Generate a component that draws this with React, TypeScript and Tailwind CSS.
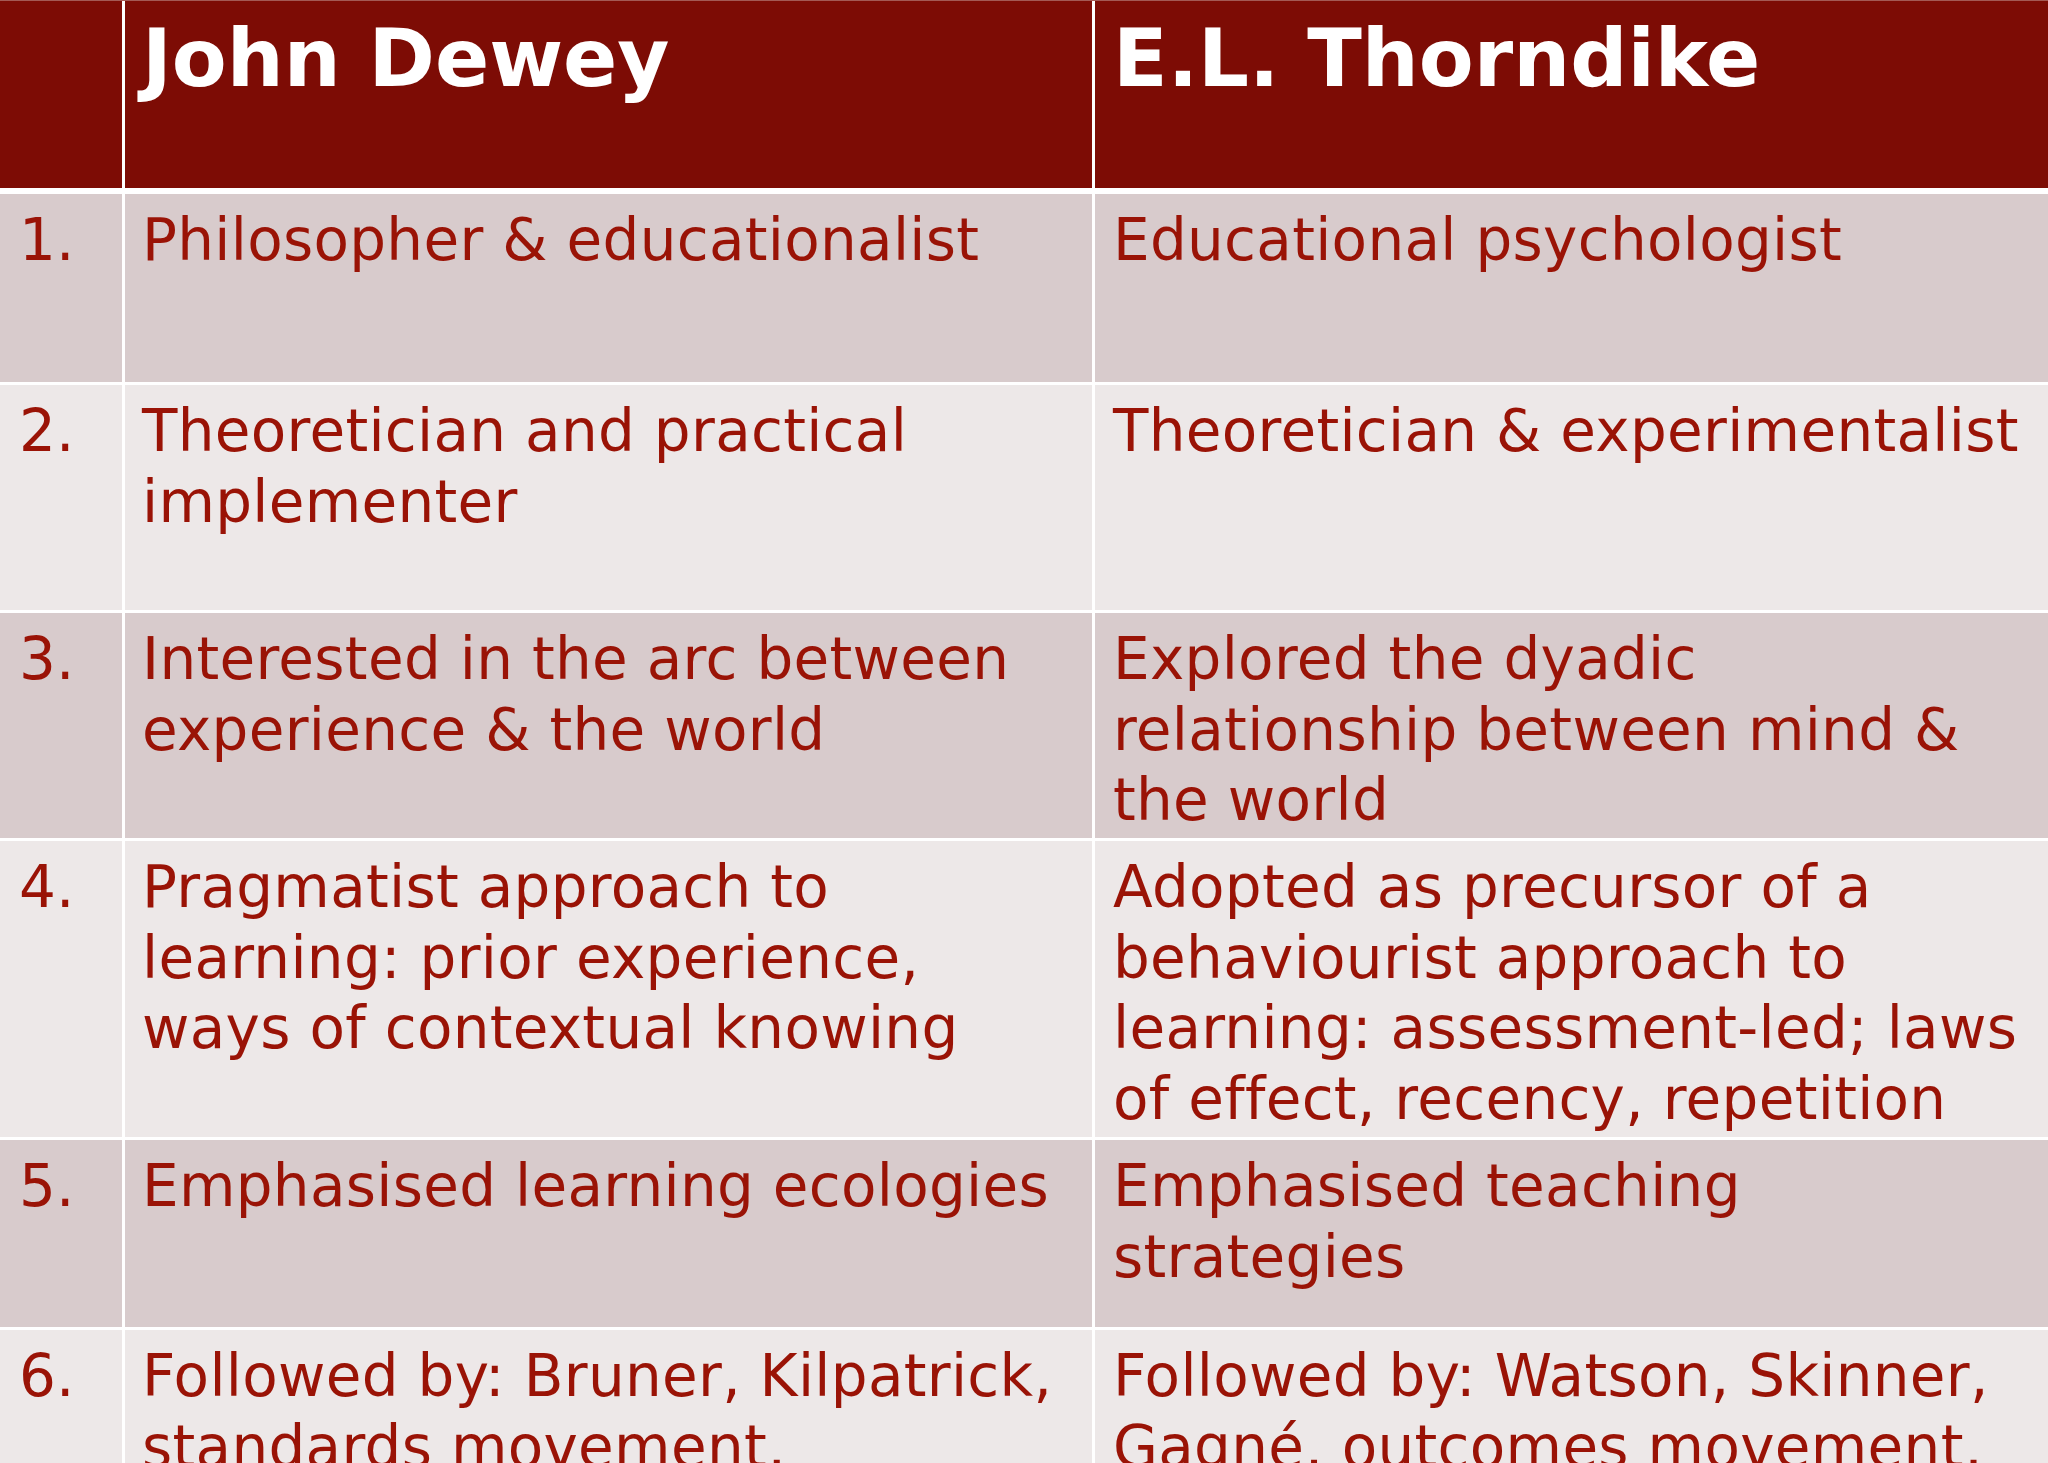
const rows: { n: string; dewey: string; thorndike: string; h: string; tone: string }[] = [
  { n: '1.', dewey: 'Philosopher & educationalist', thorndike: 'Educational psychologist', h: 'h-[188px]', tone: 'bg-[#d8cbcc]' },
  { n: '2.', dewey: 'Theoretician and practical implementer', thorndike: 'Theoretician & experimentalist', h: 'h-[225px]', tone: 'bg-[#ede8e8]' },
  {
    n: '3.',
    dewey: 'Interested in the arc between experience & the world',
    thorndike: 'Explored the dyadic relationship between mind & the world',
    h: 'h-[225px]',
    tone: 'bg-[#d8cbcc]',
  },
  {
    n: '4.',
    dewey: 'Pragmatist approach to learning: prior experience, ways of contextual knowing',
    thorndike: 'Adopted as precursor of a behaviourist approach to learning: assessment-led; laws of effect, recency, repetition',
    h: 'h-[296px]',
    tone: 'bg-[#ede8e8]',
  },
  { n: '5.', dewey: 'Emphasised learning ecologies', thorndike: 'Emphasised teaching strategies', h: 'h-[187px]', tone: 'bg-[#d8cbcc]' },
  {
    n: '6.',
    dewey: 'Followed by: Bruner, Kilpatrick, standards movement,',
    thorndike: 'Followed by: Watson, Skinner, Gagné, outcomes movement,',
    h: 'h-[240px]',
    tone: 'bg-[#ede8e8]',
  },
];

export default function App() {
  return (
    <div className="h-[1463px] w-[2048px] overflow-hidden bg-white font-['DejaVu_Sans',Verdana,sans-serif]">
      <div className="flex flex-col gap-[3px]">
        <div className="mb-[3px] grid h-[188px] grid-cols-[122px_967px_1fr] gap-x-[3px] border-t border-[#a45a55]">
          <div className="bg-[#7d0c05]" />
          <div className="bg-[#7d0c05] px-[17px] pt-[10px] text-[80px] font-bold leading-[1.2] text-white">John Dewey</div>
          <div className="bg-[#7d0c05] px-[18px] pt-[10px] text-[80px] font-bold leading-[1.2] text-white">E.L. Thorndike</div>
        </div>
        {rows.map((r) => (
          <div key={r.n} className={`grid shrink-0 grid-cols-[122px_967px_1fr] gap-x-[3px] ${r.h}`}>
            <div className={`${r.tone} pl-[19px] pt-[11px] text-[58px] leading-[70.5px] text-[#9a1306]`}>{r.n}</div>
            <div className={`${r.tone} px-[17px] pt-[11px] text-[58px] leading-[70.5px] tracking-[0.3px] text-[#9a1306]`}>
              {r.dewey}
            </div>
            <div className={`${r.tone} pl-[18px] pr-[8px] pt-[11px] text-[58px] leading-[70.5px] tracking-[0.3px] text-[#9a1306]`}>
              {r.thorndike}
            </div>
          </div>
        ))}
      </div>
    </div>
  );
}
